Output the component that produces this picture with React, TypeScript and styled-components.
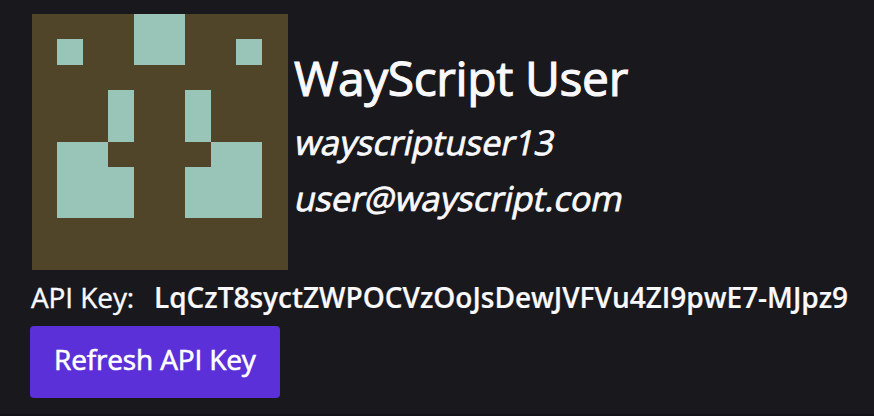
import React from "react";
import styled, { createGlobalStyle } from "styled-components";

const GlobalStyle = createGlobalStyle`
  * { box-sizing: border-box; }
  html, body { margin: 0; background: #19181d; }
`;

const Page = styled.main`
  width: 874px;
  height: 416px;
  padding: 14px 0 0 30px;
  overflow: hidden;
  background: #19181d;
  border-bottom: 2px solid #131217;
  color: #f9f9fc;
  font-family: "Open Sans", "Noto Sans", sans-serif;
  white-space: nowrap;
`;

const Profile = styled.section`
  display: flex;
  height: 256px;
  padding-left: 2px;
`;

const Avatar = styled.svg`
  display: block;
  flex: none;
  width: 256px;
  height: 256px;
  background: #504528;
`;

const Details = styled.div`
  padding: 29px 0 0 6px;
`;

const Name = styled.h1`
  margin: 0 0 1px;
  font-size: 48px;
  font-weight: 400;
  line-height: 70px;
  letter-spacing: -0.4px;
  -webkit-text-stroke: 1.1px currentColor;
`;

const Detail = styled.p`
  width: max-content;
  margin: 0;
  padding-left: 2px;
  font-size: 34px;
  font-weight: 400;
  line-height: 56px;
  transform: skewX(-12deg);
  -webkit-text-stroke: 0.8px currentColor;
`;

const KeyRow = styled.div`
  display: flex;
  height: 56px;
  padding-bottom: 2px;
  align-items: center;
  font-size: 28px;
  line-height: 54px;
`;

const KeyLabel = styled.span`
  width: 124px;
  padding-left: 1px;
  letter-spacing: -0.1px;
  -webkit-text-stroke: 0.4px currentColor;
`;

const KeyValue = styled.span`
  font-weight: 600;
  letter-spacing: -0.02px;
  -webkit-text-stroke: 0.2px currentColor;
`;

const RefreshButton = styled.button`
  display: flex;
  width: 250px;
  height: 72px;
  padding: 0 0 6px 24px;
  align-items: center;
  border: 0;
  border-radius: 4px;
  background: #5b30d9;
  color: #fff;
  font: 400 28px/40px "Open Sans", "Noto Sans", sans-serif;
  letter-spacing: -0.15px;
  -webkit-text-stroke: 0.6px currentColor;
`;

const tiles = [
  [102, 0, 51, 51],
  [25, 25, 26, 26],
  [204, 25, 26, 26],
  [76, 76, 26, 52],
  [153, 76, 26, 52],
  [25, 128, 51, 25],
  [179, 128, 51, 25],
  [25, 153, 77, 51],
  [153, 153, 77, 51],
];

export default function App() {
  return (
    <>
      <GlobalStyle />
      <Page>
        <Profile>
          <Avatar viewBox="0 0 256 256" shapeRendering="crispEdges" aria-label="User avatar">
            {tiles.map(([x, y, width, height]) => (
              <rect key={`${x}-${y}`} x={x} y={y} width={width} height={height} fill="#98c5b8" />
            ))}
          </Avatar>
          <Details>
            <Name>WayScript User</Name>
            <Detail>wayscriptuser13</Detail>
            <Detail>user@wayscript.com</Detail>
          </Details>
        </Profile>
        <KeyRow>
          <KeyLabel>API Key:</KeyLabel>
          <KeyValue>LqCzT8syctZWPOCVzOoJsDewJVFVu4ZI9pwE7-MJpz9</KeyValue>
        </KeyRow>
        <RefreshButton type="button">Refresh API Key</RefreshButton>
      </Page>
    </>
  );
}
